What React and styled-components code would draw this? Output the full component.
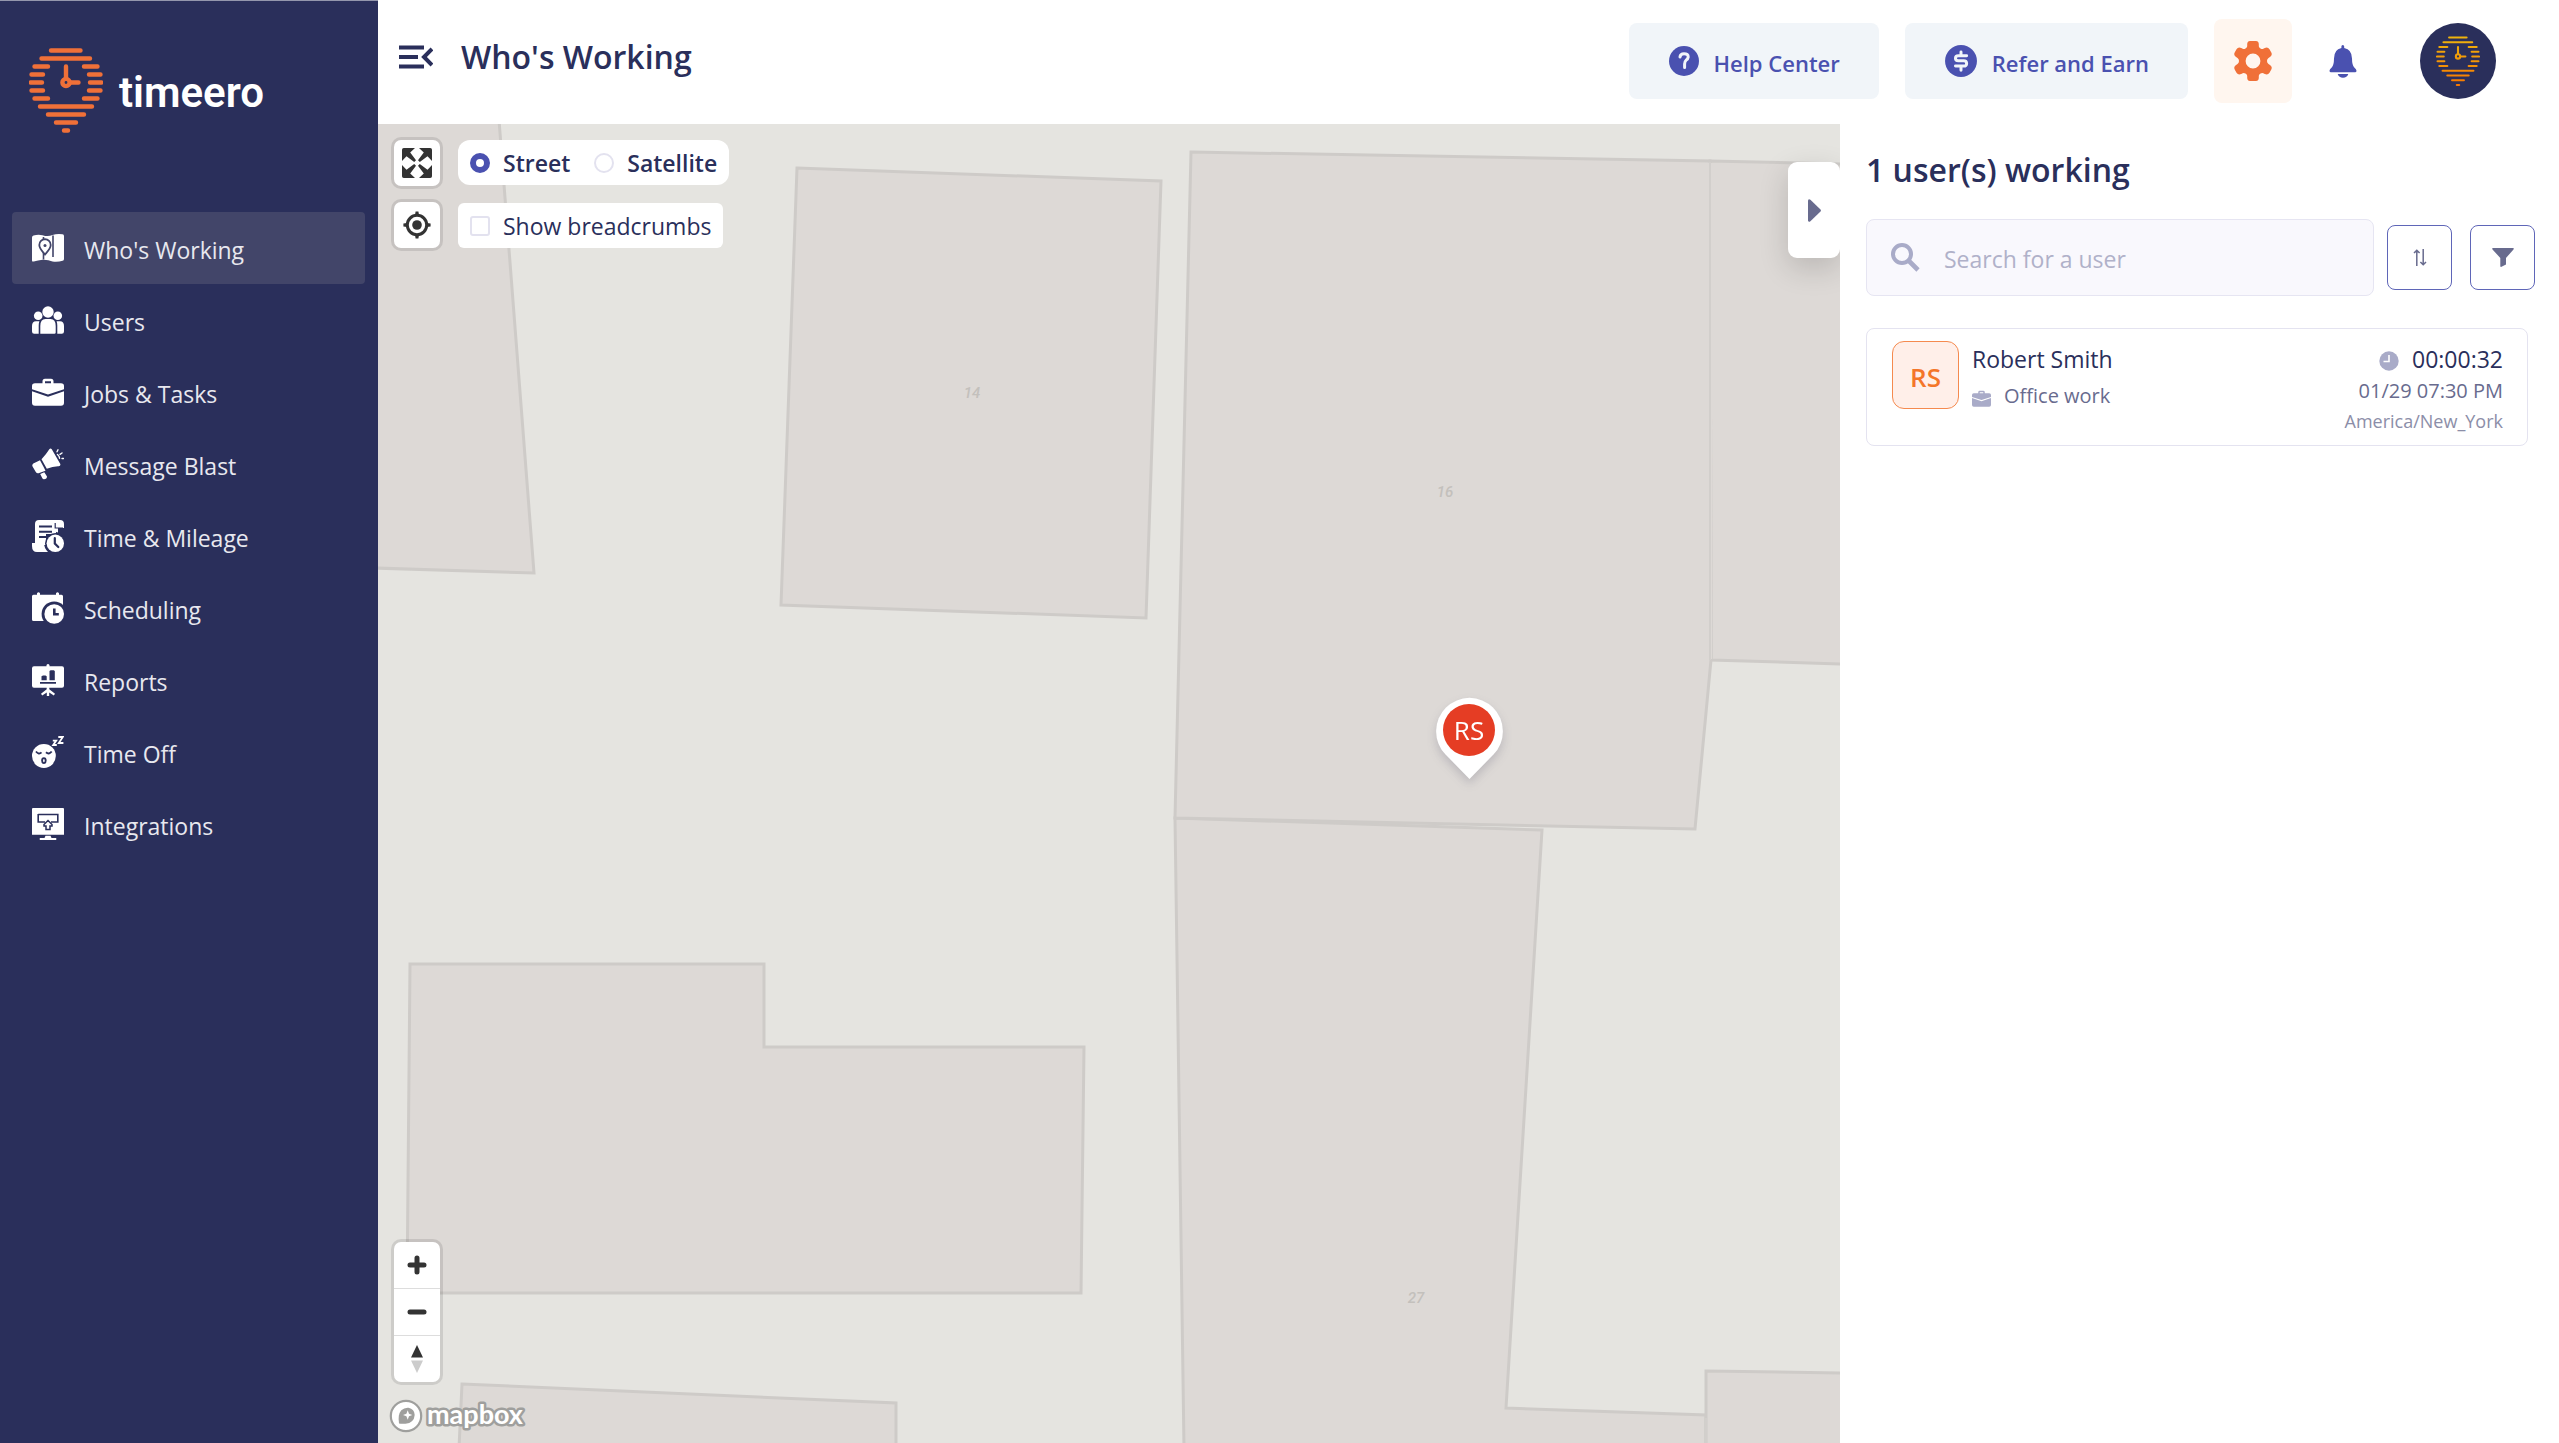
import React, { useState } from 'react';
import styled, { createGlobalStyle } from 'styled-components';

const GlobalStyle = createGlobalStyle`
  * {
    box-sizing: border-box;
  }
  body {
    margin: 0;
    background: #fff;
    color: #2a2f5b;
    font-family: 'Open Sans', 'Noto Sans', sans-serif;
    font-size: 23px;
  }
  button, input {
    font-family: inherit;
    font-size: inherit;
    color: inherit;
    margin: 0;
  }
  button {
    cursor: pointer;
  }
  svg {
    display: block;
    flex: none;
  }
`;

const Page = styled.div`
  display: flex;
  min-height: 100vh;
`;

/* Sidebar */

const Sidebar = styled.aside`
  flex: none;
  width: 378px;
  padding: 47px 13px 0 12px;
  background: #2a2f5b;
  border-top: 1px solid #9497ad;
  color: #e8e8ef;
`;

const Brand = styled.a`
  display: flex;
  align-items: center;
  gap: 16px;
  height: 86px;
  padding-left: 17px;
  color: #fff;
  font-family: Roboto, sans-serif;
  font-size: 42px;
  font-weight: 600;
  line-height: 48px;
  text-decoration: none;
`;

const Nav = styled.nav`
  display: flex;
  flex-direction: column;
  margin-top: 78px;
`;

const NavItem = styled.a`
  display: flex;
  align-items: center;
  gap: 20px;
  height: 72px;
  padding: 0 20px;
  border-radius: 4px;
  background: ${({ $active }) => ($active ? '#424569' : 'transparent')};
  color: inherit;
  line-height: 32px;
  text-decoration: none;

  svg {
    color: #fff;
  }
`;

const Label = styled.span`
  padding-top: 3px;
`;

/* Header */

const Main = styled.div`
  flex: 1;
  min-width: 0;
  display: flex;
  flex-direction: column;
`;

const Header = styled.header`
  flex: none;
  display: flex;
  align-items: center;
  height: 124px;
  padding: 0 63px 2px 21px;
`;

const Heading = styled.div`
  flex: 1;
  display: flex;
  align-items: center;
  gap: 28px;
  padding-bottom: 8px;
`;

const MenuButton = styled.button`
  padding: 0;
  border: 0;
  background: none;
`;

const Title = styled.h1`
  margin: 0;
  font-size: 32px;
  font-weight: 600;
  line-height: 40px;
`;

const HeaderActions = styled.div`
  display: flex;
  align-items: center;
  gap: 26px;
`;

const HeaderButton = styled.button`
  display: flex;
  align-items: center;
  gap: 14px;
  height: 76px;
  padding: 0 39px;
  border: 0;
  border-radius: 8px;
  background: #f1f5f9;
  color: #4a51b0;
  font-size: 22px;
  font-weight: 600;
`;

const SettingsButton = styled.button`
  display: grid;
  place-items: center;
  width: 78px;
  height: 84px;
  padding: 0;
  border: 0;
  border-radius: 8px;
  background: #fff6ef;
  color: #f07038;
`;

const BellButton = styled.button`
  display: grid;
  place-items: center;
  width: 50px;
  height: 50px;
  padding: 0;
  border: 0;
  background: none;
  color: #4a51b0;
`;

const ProfileButton = styled.button`
  display: grid;
  place-items: center;
  width: 76px;
  height: 76px;
  margin-left: 26px;
  padding: 0;
  border: 0;
  border-radius: 50%;
  background: #2a2f5b;
`;

/* Map */

const Content = styled.div`
  flex: 1;
  display: flex;
`;

const MapArea = styled.section`
  position: relative;
  flex: 1;
  min-width: 0;
  overflow: hidden;
  background: #e5e4e0;
`;

const MapCanvas = styled.svg`
  position: absolute;
  top: 0;
  left: 0;
`;

const Building = styled.polygon`
  fill: #ddd9d6;
  stroke: #cecbc8;
  stroke-width: 3;
`;

const HouseNumber = styled.text`
  fill: #c3c0bc;
  font-family: Roboto, sans-serif;
  font-size: 15px;
  font-style: italic;
  font-weight: 500;
  text-anchor: middle;
`;

const MapControls = styled.div`
  position: absolute;
  top: 16px;
  left: 16px;
  display: grid;
  grid-template-columns: 46px auto;
  grid-auto-rows: 46px;
  gap: 16px 18px;
  justify-items: start;
`;

const MapButton = styled.button`
  display: grid;
  place-items: center;
  width: 46px;
  height: 46px;
  padding: 0;
  border: 0;
  border-radius: 7px;
  background: #fff;
  box-shadow: 0 0 0 3px rgba(0, 0, 0, 0.1);
`;

const OptionBox = styled.div`
  align-self: ${({ $round }) => ($round ? 'start' : 'end')};
  display: flex;
  gap: ${({ $round }) => ($round ? 24 : 26)}px;
  height: 45px;
  padding: 0 12px;
  border-radius: ${({ $round }) => ($round ? 12 : 6)}px;
  background: #fff;
  font-weight: ${({ $round }) => ($round ? 600 : 500)};
`;

const Option = styled.label`
  display: flex;
  align-items: center;
  gap: 13px;
  line-height: 32px;
`;

const Radio = styled.input`
  appearance: none;
  width: 20px;
  height: 20px;
  border: 2px solid #e3e2ef;
  border-radius: 50%;
  background: #fff;

  &:checked {
    border: 6px solid #4a51b0;
  }
`;

const Checkbox = styled.input`
  appearance: none;
  width: 20px;
  height: 20px;
  border: 2px solid #e3e2ef;
  border-radius: 3px;
  background: #fff;

  &:checked {
    background: #4a51b0;
  }
`;

const ZoomControls = styled.div`
  position: absolute;
  left: 16px;
  bottom: 61px;
  width: 46px;
  border-radius: 7px;
  background: #fff;
  box-shadow: 0 0 0 3px rgba(0, 0, 0, 0.1);

  button {
    display: grid;
    place-items: center;
    width: 46px;
    height: 46px;
    padding: 0;
    border: 0;
    background: none;
  }
  button + button {
    height: 47px;
    border-top: 1px solid #ddd;
  }
`;

const MapboxLink = styled.a`
  position: absolute;
  left: 11px;
  bottom: 9px;
  display: flex;
`;

const MapboxWord = styled.text`
  fill: #fff;
  stroke: #9f9f9d;
  stroke-width: 5px;
  stroke-linejoin: round;
  paint-order: stroke;
  font-family: Lato, sans-serif;
  font-size: 27px;
  font-weight: 700;
`;

const Pin = styled.button`
  position: absolute;
  left: 1058px;
  top: 574px;
  padding: 0;
  border: 0;
  background: none;

  svg {
    overflow: visible;
    filter: drop-shadow(0 5px 5px rgba(60, 60, 90, 0.2));
  }
  text {
    fill: #fff;
    font-size: 26px;
    text-anchor: middle;
  }
`;

const PanelToggle = styled.button`
  position: absolute;
  top: 38px;
  right: 0;
  z-index: 1;
  display: grid;
  place-items: center;
  width: 52px;
  height: 96px;
  padding: 0;
  border: 0;
  border-radius: 9px;
  background: #fff;
  box-shadow: 0 10px 30px rgba(0, 0, 0, 0.16);
`;

/* Users panel */

const Panel = styled.section`
  flex: none;
  width: 719px;
  padding: 26px 24px 0 26px;
`;

const PanelTitle = styled.h2`
  margin: 0;
  font-size: 32px;
  font-weight: 600;
  line-height: 40px;
`;

const Filters = styled.div`
  display: flex;
  align-items: center;
  gap: 18px;
  margin-top: 29px;
`;

const SearchBox = styled.label`
  flex: 1;
  display: flex;
  align-items: center;
  gap: 24px;
  height: 77px;
  margin-right: -5px;
  padding: 0 24px;
  border: 1px solid #e6e5f2;
  border-radius: 8px;
  background: #f9f8fd;
  color: #a9abc8;

  input {
    flex: 1;
    min-width: 0;
    padding: 2px 0 0;
    border: 0;
    outline: 0;
    background: none;
    color: #2a2f5b;
  }
  input::placeholder {
    color: #b0b1c9;
    opacity: 1;
  }
`;

const SquareButton = styled.button`
  display: grid;
  place-items: center;
  width: 65px;
  height: 65px;
  padding: 0;
  border: 1px solid #5f66b8;
  border-radius: 8px;
  background: #fff;
  color: #686b8e;
`;

const UserCard = styled.article`
  display: flex;
  gap: 13px;
  height: 118px;
  margin: 32px 7px 0 0;
  padding: 12px 24px 0 25px;
  border: 1px solid #e4e3f0;
  border-radius: 8px;
`;

const Avatar = styled.div`
  flex: none;
  display: grid;
  place-items: center;
  width: 67px;
  height: 68px;
  padding-top: 3px;
  border: 1px solid #f58a4f;
  border-radius: 12px;
  background: #ffefe9;
  color: #f47629;
  font-size: 26px;
  font-weight: 600;
`;

const UserInfo = styled.div`
  flex: 1;
  display: flex;
  flex-direction: column;
  gap: 5px;
  padding-top: 2px;
`;

const TimeInfo = styled.div`
  display: flex;
  flex-direction: column;
  align-items: flex-end;
  padding-top: 2px;
`;

const CardLine = styled.div`
  display: flex;
  align-items: center;
  gap: 13px;
  color: ${({ $muted }) => ($muted ? '#686b8e' : '#2a2f5b')};
  font-size: ${({ $muted }) => ($muted ? 20 : 23)}px;
  line-height: 32px;

  svg {
    margin-top: 4px;
    color: #a9abc8;
  }
`;

const Zone = styled.div`
  color: #8c8ea8;
  font-size: 18px;
  line-height: 28px;
`;

/* Icons */

function PinLogo({ width, height, from, to, thin }) {
  const id = `logo-${width}`;
  // [y, x1, x2] for each stripe of the pin
  const stripes = [
    [2.5, 22, 51.5], [10.5, 12.5, 61],
    [18.5, 5.5, 19], [18.5, 55, 68.5],
    [26.5, 2.5, 14], [26.5, 60, 71.5],
    [34.5, 1.5, 13], [34.5, 61, 72.5],
    [42.5, 2.5, 14], [42.5, 60, 71.5],
    [50.5, 5.5, 19], [50.5, 55, 68.5],
    [58.5, 11, 63], [66.5, 19, 55], [74.5, 27, 47], [82.5, 35, 39],
  ];
  return (
    <svg width={width} height={height} viewBox="0 0 74 86" fill="none" aria-hidden="true">
      <defs>
        <linearGradient id={id} gradientUnits="userSpaceOnUse" x1="0" y1="0" x2="0" y2="86">
          <stop offset="0" stopColor={from} />
          <stop offset="1" stopColor={to} />
        </linearGradient>
      </defs>
      <g stroke={`url(#${id})`} strokeWidth={thin ? 3.5 : 4.4} strokeLinecap="round">
        <path d={stripes.map(([y, a, b]) => `M${a} ${y}L${b} ${y + 0.01}`).join('')} />
        <path d="M37 18.5L37.01 30M42 34.5L49.5 34.51" />
        <circle cx="37" cy="34.5" r="3.6" />
      </g>
    </svg>
  );
}

const Icon = ({ children, size = 32, ...rest }) => (
  <svg width={size} height={size} viewBox="0 0 32 32" fill="currentColor" aria-hidden="true" {...rest}>
    {children}
  </svg>
);

const DARK = '#2a2f5b';

const MapIcon = () => (
  <Icon>
    <path d="M0 5.5Q0 4 1.5 3.6Q6 2 10.5 3.2Q16 5 20.5 3Q25 1.6 30.5 2.3Q32 2.6 32 4V27Q32 28.4 30.6 28.8Q26 30.3 20.5 29.6Q16 27.4 10.5 27.7Q6 28.2 1.8 29.5Q0 29.9 0 28.4Z" />
    <path d="M11.5 5V27.5M21 3.5V25" stroke="#424569" strokeWidth="1.6" fill="none" />
    <path d="M13 7.2A5.8 5.8 0 0 1 18.7 13C18.7 16.5 15.5 19.5 13 22.5C10.5 19.5 7.3 16.5 7.3 13A5.8 5.8 0 0 1 13 7.2Z" stroke="#424569" strokeWidth="1.8" />
    <circle cx="13" cy="13.5" r="1.5" fill="#424569" />
  </Icon>
);

const UsersIcon = () => (
  <Icon>
    <circle cx="16" cy="8" r="5.7" />
    <circle cx="6.2" cy="11.7" r="4.3" />
    <circle cx="25.8" cy="11.7" r="4.3" />
    <path d="M8.3 29.8V22Q8.3 15 13.5 15H18.5Q23.7 15 23.7 22V28.5Q23.7 29.8 22.4 29.8ZM6.7 29.8H2.2Q0 29.8 0 27.6V22Q0 17.2 4 17.2H7.4Q6.7 19 6.7 21.5ZM25.3 29.8V21.5Q25.3 19 24.6 17.2H28Q32 17.2 32 22V27.6Q32 29.8 29.8 29.8Z" />
  </Icon>
);

const BriefcaseIcon = ({ size }) => (
  <Icon size={size}>
    <path fillRule="evenodd" d="M10.5 7.2V5.3Q10.5 2.8 13 2.8H19Q21.5 2.8 21.5 5.3V7.2H29Q32 7.2 32 10V13.3L16 18.6L0 13.3V10Q0 7.2 3 7.2ZM13 7.2H19V5.3H13Z" />
    <path d="M0 15.3L16 20.8L32 15.3V26.8Q32 29.8 29 29.8H3Q0 29.8 0 26.8Z" />
  </Icon>
);

const MegaphoneIcon = () => (
  <Icon>
    <path d="M8 12.3L11.5 18.7L13.5 22.8L6.5 25.2Q4.8 25.6 3.8 24L.7 18.8Q-.4 16.8 1.3 15.4ZM9.5 11.3Q14 6.5 17.3 1.2Q18.5-.4 19.8 1.2L28.3 16Q28.8 18 26.7 18.2Q21 18 14.8 20.8ZM8.2 26L12.3 24.2L15 28.5Q15 31 12 31.2Q10.8 31.2 10.2 30Z" />
    <path d="M25 3.8L26 1.8M28 6.3L30 5M30 10.5H31.5M25.5 6.5Q27.5 8 27.6 10.2" fill="none" stroke="currentColor" strokeWidth="1.4" strokeLinecap="round" />
  </Icon>
);

const TimesheetIcon = () => (
  <Icon>
    <path d="M3 23V4Q3 0 7 0H28Q32 0 32 4V8H26V12.5L22.5 11.6V3.3H6.5V23ZM0 23H12Q12 28 16 32H5Q0 32 0 26Z" />
    <path d="M5 2H24V14H14V25H5Z" />
    <path d="M7 6.5H20M7 11.8H20M7 17H14" stroke={DARK} strokeWidth="1.9" />
    <path d="M23.2 3V8H31" stroke={DARK} strokeWidth="1.2" fill="none" />
    <circle cx="23.3" cy="23.3" r="10.3" fill={DARK} />
    <circle cx="23.3" cy="23.3" r="8.7" />
    <path d="M22.8 18.2V23.5L26.3 27" fill="none" stroke={DARK} strokeWidth="2.2" strokeLinecap="round" />
  </Icon>
);

const CalendarIcon = () => (
  <Icon>
    <path d="M1.5 2.7H5V1.2Q6.5-.8 8 1.2V2.7H24V1.2Q25.5-.8 27 1.2V2.7H29.5Q31 2.7 31 4.2V15H16V29H1.5Q0 29 0 27.5V4.2Q0 2.7 1.5 2.7Z" />
    <circle cx="22.2" cy="22" r="12.6" fill={DARK} />
    <circle cx="22.2" cy="22" r="9.8" />
    <path d="M22.3 16.5V22.2H26.8" fill="none" stroke={DARK} strokeWidth="2.6" />
  </Icon>
);

const ReportsIcon = () => (
  <Icon>
    <path d="M14.5 2.2V1Q16-.8 17.5 1V2.2H30Q32 2.2 32 4.2V21.7Q32 23.7 30 23.7H17.3V25.2L23 29.8L21.8 31.6L17.2 28.5V32H14.8V28.5L10.2 31.6L9 29.8L14.7 25.2V23.7H2Q0 23.7 0 21.7V4.2Q0 2.2 2 2.2Z" />
    <path d="M9.5 16.3V12.2L11 11.4H13.5L14.7 12.2V16.3ZM17.5 16.3V7L18.6 6.2H21.7L22.8 7V16.3ZM8 18H24V19.8H8Z" fill={DARK} />
  </Icon>
);

const SleepIcon = () => (
  <Icon>
    <circle cx="11.9" cy="20" r="11.9" />
    <path d="M4 15.5Q6.8 19 9.5 16.3M14 16.3Q17 19 19.7 15.5" fill="none" stroke={DARK} strokeWidth="1.9" />
    <ellipse cx="11.9" cy="24.6" rx="1.8" ry="2.5" fill="#fff" stroke={DARK} strokeWidth="1.9" />
    <path d="M20.8 4.6H24.2L21.2 9H24.8M26.3 1H30.8L26.8 7H31.4" fill="none" stroke="currentColor" strokeWidth="1.8" />
  </Icon>
);

const IntegrationsIcon = () => (
  <Icon>
    <path d="M1 0H31Q32 0 32 1V26.7H0V1Q0 0 1 0ZM13.5 27.7H18.5L19.5 30H24Q25 31 24 32H8Q7 31 8 30H12.5Z" />
    <path d="M6.2 6.5H25.8V14H19M13 14H6.2V6" fill="none" stroke={DARK} strokeWidth="1.6" />
    <path d="M16 12.5L20 16.5V18H18V21.5H14V18H12V16.5Z" stroke={DARK} strokeWidth="1.5" />
  </Icon>
);

const navItems = [
  { label: "Who's Working", icon: MapIcon },
  { label: 'Users', icon: UsersIcon },
  { label: 'Jobs & Tasks', icon: BriefcaseIcon },
  { label: 'Message Blast', icon: MegaphoneIcon },
  { label: 'Time & Mileage', icon: TimesheetIcon },
  { label: 'Scheduling', icon: CalendarIcon },
  { label: 'Reports', icon: ReportsIcon },
  { label: 'Time Off', icon: SleepIcon },
  { label: 'Integrations', icon: IntegrationsIcon },
];

const buildings = [
  '-4,-4 121,-4 156,449 -4,444',
  '419,44 783,57 768,494 403,481',
  '797,694 1164,706 1128,1284 1328,1291 1328,1324 806,1324',
  '1332,37 1466,40 1466,540 1333,536',
  '1328,1247 1466,1249 1466,1324 1328,1324',
  '813,28 1332,37 1333,536 1317,705 797,694',
  '32,840 386,840 386,923 706,923 703,1169 29,1169',
  '84,1260 518,1279 518,1324 81,1324',
];

export default function App() {
  const [view, setView] = useState('street');
  const [crumbs, setCrumbs] = useState(false);

  return (
    <Page>
      <GlobalStyle />
      <Sidebar>
        <Brand href="#">
          <PinLogo width={74} height={86} from="#f07038" to="#f07038" />
          <Label>timeero</Label>
        </Brand>
        <Nav>
          {navItems.map(({ label, icon: ItemIcon }, i) => (
            <NavItem key={label} href="#" $active={i === 0}>
              <ItemIcon />
              <Label>{label}</Label>
            </NavItem>
          ))}
        </Nav>
      </Sidebar>

      <Main>
        <Header>
          <Heading>
            <MenuButton aria-label="Collapse menu">
              <svg width="34" height="24" viewBox="0 0 34 24" fill="none" stroke="#2a2f5b" strokeWidth="4">
                <path d="M0 2.5H25M0 12H19M0 21.5H25M33 4L25 12L33 20" />
              </svg>
            </MenuButton>
            <Title>Who's Working</Title>
          </Heading>
          <HeaderActions>
            <HeaderButton>
              <Icon size={32}>
                <circle cx="16" cy="16" r="15" />
                <path d="M12 12Q12.3 8.7 16 8.7Q20.3 8.7 20.2 12Q20 14 18 15.3Q16.6 16.5 16.6 19V22.5" fill="none" stroke="#f1f5f9" strokeWidth="3" strokeLinecap="round" />
              </Icon>
              <Label>Help Center</Label>
            </HeaderButton>
            <HeaderButton>
              <Icon size={34}>
                <circle cx="16" cy="16" r="15" />
                <path d="M21.3 11H13.5Q10.8 11 10.8 13.3Q10.8 15.7 13.5 15.7H18.5Q21.3 15.7 21.3 18.3Q21.3 20.8 18.5 20.8H10.8M16 7.5V10M16 22V24.8" fill="none" stroke="#f1f5f9" strokeWidth="2.8" strokeLinecap="round" />
              </Icon>
              <Label>Refer and Earn</Label>
            </HeaderButton>
            <SettingsButton aria-label="Settings">
              <svg width="38" height="40" viewBox="0 0 38 40" fill="currentColor">
                <path fillRule="evenodd" d="M16 0H22Q24.6 0 24.8 3V5.2Q25 6.6 26.5 7.5Q28 8.4 29.3 7.8L30.8 7Q33.8 5.6 35.5 8.3L37.3 11.6Q38.6 14 36.3 15.8L34.5 17Q33 18 33 20Q33 22 34.5 23L36.3 24.2Q38.6 26 37.3 28.4L35.5 31.7Q33.8 34.4 30.8 33L29.3 32.2Q28 31.6 26.5 32.5Q25 33.4 24.8 34.8V37Q24.6 40 22 40H16Q13.4 40 13.2 37V34.8Q13 33.4 11.5 32.5Q10 31.6 8.7 32.2L7.2 33Q4.2 34.4 2.5 31.7L.7 28.4Q-.6 26 1.7 24.2L3.5 23Q5 22 5 20Q5 18 3.5 17L1.7 15.8Q-.6 14 .7 11.6L2.5 8.3Q4.2 5.6 7.2 7L8.7 7.8Q10 8.4 11.5 7.5Q13 6.6 13.2 5.2V3Q13.4 0 16 0ZM19 12.6A7.4 7.4 0 1 0 19 27.4A7.4 7.4 0 1 0 19 12.6Z" />
              </svg>
            </SettingsButton>
            <BellButton aria-label="Notifications">
              <svg width="28" height="33" viewBox="0 0 28 33" fill="currentColor">
                <path d="M12.4 3V1.5Q12.4 0 13.8 0Q15.2 0 15.2 1.5V3Q23 4.5 23 13.5Q23 20 25.3 22.6Q27.5 24.5 27.5 25.8Q27.5 27.3 26 27.3H2Q.5 27.3 .5 25.8Q.5 24.5 2.7 22.6Q5 20 5 13.5Q5 4.5 12.4 3ZM8.7 29H19.3Q18 32.8 14 32.8Q10 32.8 8.7 29Z" />
              </svg>
            </BellButton>
            <ProfileButton aria-label="Profile">
              <PinLogo width={44} height={51} from="#efb50c" to="#f97600" thin />
            </ProfileButton>
          </HeaderActions>
        </Header>

        <Content>
          <MapArea aria-label="Map">
            <MapCanvas width="1462" height="1319" viewBox="0 0 1462 1319">
              {buildings.map((points) => (
                <Building key={points} points={points} />
              ))}
              <path d="M1332 39V535" stroke="#ddd9d6" strokeWidth="4" />
              <path d="M1332 38V536M1328 1294V1319" stroke="#d2cfcc" strokeWidth="2" />
              <HouseNumber x="594" y="274">14</HouseNumber>
              <HouseNumber x="1067" y="373">16</HouseNumber>
              <HouseNumber x="1038" y="1179">27</HouseNumber>
            </MapCanvas>

            <MapControls>
              <MapButton aria-label="Fullscreen">
                <svg width="30" height="30" viewBox="0 0 30 30" fill="#333">
                  <path id="corner" d="M1.8 0H13L8.2 4.5L14 12.2L12.2 14L4.5 8.2L0 13V1.8Q0 0 1.8 0Z" />
                  <use href="#corner" transform="rotate(90 15 15)" />
                  <use href="#corner" transform="rotate(180 15 15)" />
                  <use href="#corner" transform="rotate(270 15 15)" />
                </svg>
              </MapButton>
              <OptionBox $round>
                <Option>
                  <Radio type="radio" name="view" checked={view === 'street'} onChange={() => setView('street')} />
                  Street
                </Option>
                <Option>
                  <Radio type="radio" name="view" checked={view === 'satellite'} onChange={() => setView('satellite')} />
                  Satellite
                </Option>
              </OptionBox>
              <MapButton aria-label="My location">
                <svg width="28" height="28" viewBox="0 0 28 28" fill="#333">
                  <circle cx="14" cy="14" r="4.8" />
                  <circle cx="14" cy="14" r="9.7" fill="none" stroke="#333" strokeWidth="3" />
                  <path d="M12 4L12.6 .4H15.4L16 4ZM12 24L12.6 27.6H15.4L16 24ZM4 12L.4 12.6V15.4L4 16ZM24 12L27.6 12.6V15.4L24 16Z" />
                </svg>
              </MapButton>
              <OptionBox>
                <Option>
                  <Checkbox type="checkbox" checked={crumbs} onChange={() => setCrumbs(!crumbs)} />
                  Show breadcrumbs
                </Option>
              </OptionBox>
            </MapControls>

            <Pin aria-label="Robert Smith">
              <svg width="67" height="81" viewBox="0 0 67 81">
                <path d="M33.5 81L9.5 56.5A33.4 33.4 0 1 1 57.5 56.5Z" fill="#fff" />
                <circle cx="33" cy="32" r="26" fill="#e53d24" />
                <text x="33" y="42">RS</text>
              </svg>
            </Pin>

            <PanelToggle aria-label="Hide panel">
              <svg width="13" height="23" viewBox="0 0 13 23" fill="#686b8e">
                <path d="M0 1.3Q.8-.6 2.4 .8L12.5 10.5Q13.4 11.5 12.5 12.5L2.4 22.2Q.8 23.6 0 21.7Z" />
              </svg>
            </PanelToggle>

            <ZoomControls>
              <button type="button" aria-label="Zoom in">
                <svg width="20" height="20" viewBox="0 0 20 20" stroke="#333" strokeWidth="5" strokeLinecap="round">
                  <path d="M10 3V17M3 10H17" />
                </svg>
              </button>
              <button type="button" aria-label="Zoom out">
                <svg width="20" height="20" viewBox="0 0 20 20" stroke="#333" strokeWidth="5" strokeLinecap="round">
                  <path d="M3 10H17" />
                </svg>
              </button>
              <button type="button" aria-label="Reset bearing">
                <svg width="12" height="28" viewBox="0 0 12 28">
                  <path d="M0 12.5L6 0L12 12.5Z" fill="#333" />
                  <path d="M0 15.5L6 28L12 15.5Z" fill="#ccc" />
                </svg>
              </button>
            </ZoomControls>

            <MapboxLink href="#" aria-label="Mapbox">
              <svg width="144" height="36" viewBox="0 0 144 36">
                <circle cx="17" cy="18" r="15.2" fill="#fff" stroke="#9f9f9d" strokeWidth="2.2" />
                <path d="M10 25.5Q8.6 16.5 12.3 12.3Q15.2 9.5 19.5 9.8Q25.5 11 25.7 17Q25 25 16.5 25.7Q12 26 10 25.5Z" fill="#9f9f9d" />
                <path d="M18.7 12.3L20 15.7L23.3 17L20 18.3L18.7 21.7L17.4 18.3L14 17L17.4 15.7Z" fill="#fff" />
                <MapboxWord x="38" y="26">mapbox</MapboxWord>
              </svg>
            </MapboxLink>
          </MapArea>

          <Panel>
            <PanelTitle>1 user(s) working</PanelTitle>
            <Filters>
              <SearchBox>
                <svg width="29" height="29" viewBox="0 0 29 29" fill="none" stroke="currentColor">
                  <circle cx="11" cy="11" r="9" strokeWidth="4" />
                  <path d="M18 18L27 27" strokeWidth="4.6" />
                </svg>
                <input type="text" placeholder="Search for a user" aria-label="Search for a user" />
              </SearchBox>
              <SquareButton aria-label="Sort">
                <svg width="14" height="17" viewBox="0 0 14 17" fill="none" stroke="currentColor" strokeWidth="1.5">
                  <path d="M3.8 17V1.5M1 4L3.8 1.2L6.6 4M10.2 0V15.5M7.4 13L10.2 15.8L13 13" />
                </svg>
              </SquareButton>
              <SquareButton aria-label="Filter">
                <svg width="22" height="19" viewBox="0 0 22 19" fill="currentColor">
                  <path d="M1 0H21Q22.4 .2 21.5 1.4L14 10V16.5L9 19Q8.3 19 8.3 18V10L.5 1.4Q-.4 .2 1 0Z" />
                </svg>
              </SquareButton>
            </Filters>
            <UserCard>
              <Avatar>RS</Avatar>
              <UserInfo>
                <CardLine>Robert Smith</CardLine>
                <CardLine $muted>
                  <BriefcaseIcon size={19} />
                  Office work
                </CardLine>
              </UserInfo>
              <TimeInfo>
                <CardLine>
                  <svg width="20" height="20" viewBox="0 0 20 20">
                    <circle cx="10" cy="10" r="9.7" fill="currentColor" />
                    <path d="M10 4V10.5H4.5" fill="none" stroke="#fff" strokeWidth="1.6" />
                  </svg>
                  00:00:32
                </CardLine>
                <CardLine $muted>01/29 07:30 PM</CardLine>
                <Zone>America/New_York</Zone>
              </TimeInfo>
            </UserCard>
          </Panel>
        </Content>
      </Main>
    </Page>
  );
}
